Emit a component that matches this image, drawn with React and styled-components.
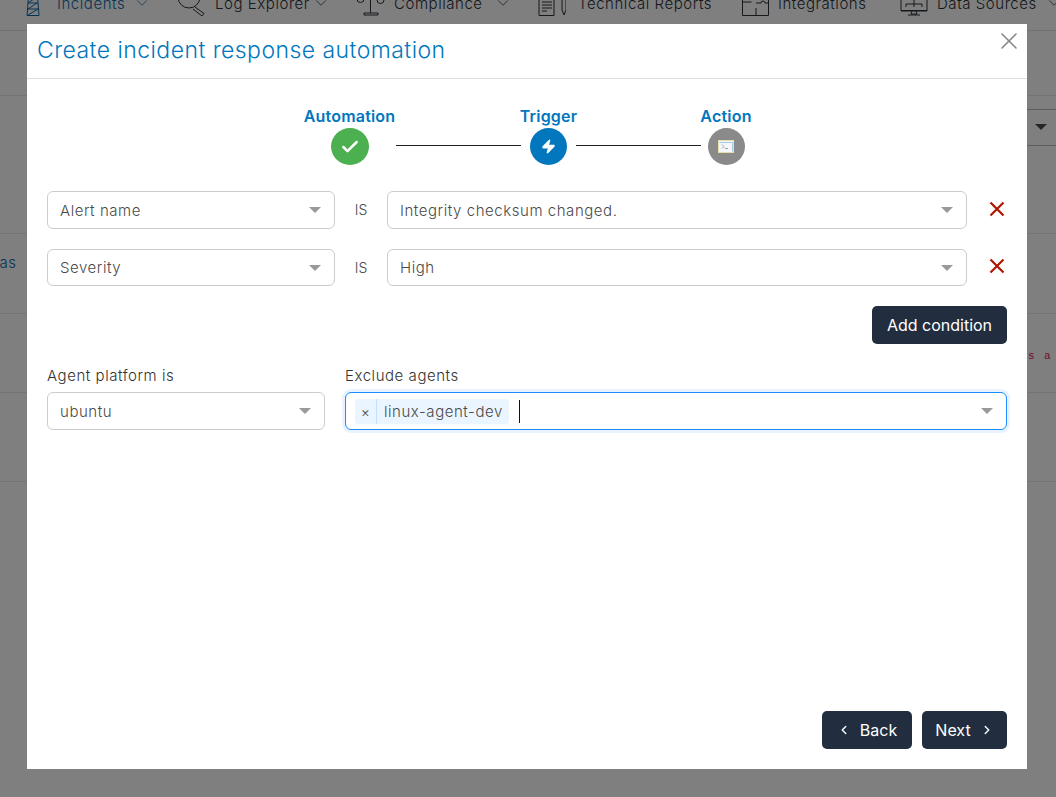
import React from "react";
import styled, { createGlobalStyle } from "styled-components";
import { Check, ChevronDown, ChevronLeft, ChevronRight, X, Zap } from "lucide-react";

const GlobalStyle = createGlobalStyle`
  html, body {
    margin: 0;
    height: 100%;
    overflow: hidden;
    background: #fff;
    font-family: "Inter", "Open Sans", sans-serif;
  }
  * { box-sizing: border-box; }
`;

const navItems = [
  { label: "Incidents", icon: "tower", slot: 35, textWidth: 69, chevron: true, blue: true },
  { label: "Log Explorer", icon: "search", slot: 37, textWidth: 90, chevron: true },
  { label: "Compliance", icon: "scale", slot: 37, textWidth: 93, chevron: true },
  { label: "Technical Reports", icon: "doc", slot: 40, textWidth: 134 },
  { label: "Integrations", icon: "puzzle", slot: 36, textWidth: 92 },
  { label: "Data Sources", icon: "monitor", slot: 37, textWidth: 101, chevron: true },
];

// y runs from -10 so the numbers read as page pixels, the nav is scrolled off the top
const navIconPaths = {
  tower: "M7 -10L5 15.500h12L15 -10M6.500 -3h9M6 3h10M5.500 9h11M6 9l9 -6M6 15l10 -6M6 3l9 -6",
  search: "M0 -3a11 11 0 1 0 22 0a11 11 0 1 0 -22 0M4 -3a7 7 0 0 1 7 -7M17 7l9 6.500l-2 2.500l-9 -7",
  scale: "M13.500 -8V13M7 13h14v2H7zM5 -6h17M0 -1a3.500 3.500 0 0 0 7 0M20 0a3.500 3.500 0 0 0 7 0",
  doc: "M1 -5h15v20.500H1zM4 2h10M4 5h10M4 8h10M4 11h5M24 -3h4v13l-2 5l-2 -5z",
  puzzle: "M0.500 -8h26v23.500H0.500zM0.500 2h9M14 15.500V8M14 -8v5M14 3h5a2 2 0 0 1 4 0h3.500",
  monitor: "M1 -6h26v17H1zM1 10.500h26M12 11l-1 3h6l-1 -3M8 15h12M14 -2v6M6 4h16M6 4v3M14 4v3M22 4v3",
};

const NavIcon = ({ name }) => (
  <svg width="28" height="26" viewBox="0 -10 28 26" fill="none" stroke="currentColor" strokeWidth="1">
    <path d={navIconPaths[name]} />
  </svg>
);

const CrossIcon = () => (
  <svg width="16" height="16" viewBox="0 0 16 16">
    <path d="M1.500 1.500L14.500 14.500M14.500 1.500L1.500 14.500" stroke="#b01500" strokeWidth="2.200" />
  </svg>
);

const App = () => {
  return (
    <>
      <GlobalStyle />
      <Page>
        <TopNav>
          {navItems.map((item) => (
            <NavItem key={item.label} $blue={item.blue}>
              <NavIconSlot $width={item.slot}>
                <NavIcon name={item.icon} />
              </NavIconSlot>
              <NavLabel $width={item.textWidth}>{item.label}</NavLabel>
              {item.chevron && <ChevronDown size={18} strokeWidth={1} />}
            </NavItem>
          ))}
        </TopNav>
        <PageRow $height={65} />
        <PageRow $height={138}>
          <PageSelect>
            <Caret $dark $right={38} $top={14} />
          </PageSelect>
        </PageRow>
        <PageRow $height={80}>
          <PageLink>
            <span>Alias</span>
            <PageLinkSub>s</PageLinkSub>
          </PageLink>
        </PageRow>
        <PageRow $height={79}>
          <PageCode>s a t</PageCode>
        </PageRow>
        <PageRow $height={89} />
      </Page>

      <Overlay>
        <Modal>
          <ModalHeader>
            <ModalTitle>Create incident response automation</ModalTitle>
            <CloseButton>
              <X size={28} strokeWidth={1.4} />
            </CloseButton>
          </ModalHeader>
          <ModalBody>
            <Stepper>
              <Step $width={93}>
                <StepLabel>Automation</StepLabel>
                <StepCircle $color="#4caf50" $size={38}>
                  <Check size={20} strokeWidth={3} color="#fff" />
                </StepCircle>
              </Step>
              <StepLine />
              <Step $width={55}>
                <StepLabel>Trigger</StepLabel>
                <StepCircle $color="#0277bd">
                  <Zap size={15} fill="#fff" color="#fff" />
                </StepCircle>
              </Step>
              <StepLine />
              <Step $width={50}>
                <StepLabel>Action</StepLabel>
                <StepCircle $color="#8a8a8a">
                  <svg width="16" height="13" viewBox="0 0 16 13">
                    <rect x="0.5" y="0.5" width="15" height="12" fill="#f4f6f7" stroke="#e8dfae" />
                    <path d="M1.500 2.500h13M14.500 2.500v9" fill="none" stroke="#8fc0e0" strokeWidth="0.8" />
                    <path d="M4 4.500l2 2l-2 2M7 8.500h3" fill="none" stroke="#8a8a8a" strokeWidth="0.8" />
                  </svg>
                </StepCircle>
              </Step>
            </Stepper>

            <ConditionRow>
              <Select $width="288px">
                Alert name
                <Caret />
              </Select>
              <IsLabel>IS</IsLabel>
              <Select $width="580px">
                Integrity checksum changed.
                <Caret />
              </Select>
              <RemoveButton>
                <CrossIcon />
              </RemoveButton>
            </ConditionRow>
            <ConditionRow>
              <Select $width="288px">
                Severity
                <Caret />
              </Select>
              <IsLabel>IS</IsLabel>
              <Select $width="580px">
                High
                <Caret />
              </Select>
              <RemoveButton>
                <CrossIcon />
              </RemoveButton>
            </ConditionRow>

            <AddRow>
              <DarkButton $width={135}>Add condition</DarkButton>
            </AddRow>

            <FilterRow>
              <Field $width="278px">
                <FieldLabel>Agent platform is</FieldLabel>
                <Select $width="100%">
                  ubuntu
                  <Caret />
                </Select>
              </Field>
              <Field $width="662px">
                <FieldLabel>Exclude agents</FieldLabel>
                <Select $width="100%" $focused>
                  <Chip>
                    <ChipRemove>×</ChipRemove>
                    <ChipText>linux-agent-dev</ChipText>
                  </Chip>
                  <TextCursor />
                  <Caret />
                </Select>
              </Field>
            </FilterRow>

            <Footer>
              <DarkButton $width={90}>
                <ChevronLeft size={14} strokeWidth={2.4} />
                <span>Back</span>
              </DarkButton>
              <DarkButton $width={85}>
                <span>Next</span>
                <ChevronRight size={14} strokeWidth={2.4} />
              </DarkButton>
            </Footer>
          </ModalBody>
        </Modal>
      </Overlay>
    </>
  );
};

export default App;

const Page = styled.div`
  width: 100%;
  height: 797px;
  overflow: hidden;
  color: #2b3038;
`;

const TopNav = styled.nav`
  display: grid;
  grid-template-columns: 156px 179px 181px 204px 158px 1fr;
  height: 31px;
  padding-left: 22px;
  overflow: hidden;
  border-bottom: 1px solid #e4e4e4;
  font-size: 15px;
  font-weight: 300;
  letter-spacing: 0.55px;
`;

const NavItem = styled.div`
  display: flex;
  align-items: center;
  height: 26px;
  margin-top: -10px;
  color: ${(p) => (p.$blue ? "#0d6aa8" : "#2b3038")};

  svg { flex-shrink: 0; }
`;

const NavIconSlot = styled.span`
  display: flex;
  flex-shrink: 0;
  width: ${(p) => p.$width}px;
`;

const NavLabel = styled.span`
  flex-shrink: 0;
  width: ${(p) => p.$width}px;
  margin-right: 7px;
  white-space: nowrap;
`;

const PageRow = styled.div`
  display: flex;
  height: ${(p) => p.$height}px;
  border-bottom: 1px solid #e8e8e8;
`;

const PageSelect = styled.div`
  position: relative;
  flex-shrink: 0;
  width: 120px;
  height: 37px;
  margin: 13px -30px 0 auto;
  border: 1px solid #bdbdbd;
`;

const PageLink = styled.div`
  display: flex;
  flex-direction: column;
  gap: 3px;
  margin: 19px 0 0 -19px;
  font-size: 15px;
  line-height: 20px;
  letter-spacing: 0.5px;
  color: #0d6aa8;
  font-weight: 300;
`;

const PageLinkSub = styled.span`
  margin-left: 13px;
  font-size: 12px;
  line-height: 14px;
`;

const PageCode = styled.span`
  flex-shrink: 0;
  width: 40px;
  margin: 35px -12px 0 auto;
  font-family: "Liberation Mono", monospace;
  font-size: 11px;
  line-height: 14px;
  letter-spacing: 1.4px;
  white-space: pre;
  color: #d81b60;
`;

const Overlay = styled.div`
  position: fixed;
  inset: 0;
  background: rgba(0, 0, 0, 0.5);
  padding: 24px 29px 28px 27px;
`;

const Modal = styled.div`
  display: flex;
  flex-direction: column;
  width: 1000px;
  height: 745px;
  background: #fff;
`;

const ModalHeader = styled.header`
  display: flex;
  justify-content: space-between;
  height: 55px;
  padding: 13px 4px 0 10px;
  border-bottom: 1px solid #e0e0e0;
`;

const ModalTitle = styled.h2`
  margin: 0;
  font-size: 23px;
  line-height: 27px;
  font-weight: 300;
  letter-spacing: 0.45px;
  color: #0277bd;
`;

const CloseButton = styled.button`
  display: flex;
  height: 28px;
  margin-top: -10px;
  padding: 0;
  border: none;
  background: none;
  color: #888;
`;

const ModalBody = styled.div`
  display: flex;
  flex: 1;
  flex-direction: column;
  padding: 27px 20px 20px;
`;

const Stepper = styled.div`
  display: flex;
  justify-content: center;
  margin-bottom: 26px;
`;

const Step = styled.div`
  display: flex;
  flex-direction: column;
  align-items: center;
  gap: 1px;
  width: ${(p) => p.$width}px;
  height: 59px;
`;

const StepLabel = styled.span`
  font-size: 16px;
  line-height: 21px;
  font-weight: 600;
  letter-spacing: 0.2px;
  color: #0277bd;
  white-space: nowrap;
`;

const StepCircle = styled.span`
  display: flex;
  align-items: center;
  justify-content: center;
  flex-shrink: 0;
  width: ${(p) => p.$size ?? 37}px;
  height: 37px;
  border-radius: 50%;
  background: ${(p) => p.$color};
`;

const StepLine = styled.span`
  width: 125px;
  height: 1px;
  margin-top: 39px;
  background: #222;
`;

const ConditionRow = styled.div`
  display: flex;
  align-items: center;
  margin-bottom: 20px;
`;

const Select = styled.div`
  position: relative;
  display: flex;
  align-items: center;
  flex-shrink: 0;
  width: ${(p) => p.$width};
  height: 37.5px;
  padding-left: ${(p) => (p.$focused ? "9px" : "12px")};
  padding-top: 0.5px;
  font-size: 15px;
  font-weight: 300;
  letter-spacing: 0.55px;
  color: #4a4a4a;
  border: 1px solid ${(p) => (p.$focused ? "#1a8cff" : "#cccccc")};
  border-radius: 6px;
  box-shadow: ${(p) => (p.$focused ? "0 0 0 3px #e8f3ff" : "none")};
`;

const Caret = styled.span`
  position: absolute;
  top: ${(p) => p.$top ?? 15}px;
  right: ${(p) => p.$right ?? 13}px;
  width: 0;
  height: 0;
  border-left: 6px solid transparent;
  border-right: 6px solid transparent;
  border-top: 6px solid ${(p) => (p.$dark ? "#4c4c4c" : "#999")};
`;

const IsLabel = styled.span`
  flex-shrink: 0;
  width: 52px;
  text-align: center;
  font-size: 14px;
  font-weight: 300;
  color: #4a4a4a;
`;

const RemoveButton = styled.button`
  display: flex;
  flex-shrink: 0;
  margin: -2px 0 0 22px;
  padding: 0;
  border: none;
  background: none;
`;

const AddRow = styled.div`
  display: flex;
  justify-content: flex-end;
  margin-bottom: 22px;
`;

const DarkButton = styled.button`
  display: flex;
  align-items: center;
  justify-content: center;
  gap: 9px;
  width: ${(p) => p.$width}px;
  height: 38px;
  padding: 0;
  border: none;
  border-radius: 5px;
  background: #222e3f;
  color: #fff;
  font-family: inherit;
  font-size: 16px;
  font-weight: 400;
`;

const FilterRow = styled.div`
  display: flex;
  gap: 20px;
`;

const Field = styled.div`
  display: flex;
  flex-direction: column;
  gap: 6px;
  width: ${(p) => p.$width};
`;

const FieldLabel = styled.label`
  font-size: 15px;
  line-height: 20px;
  font-weight: 300;
  letter-spacing: 0.55px;
  color: #333;
`;

const Chip = styled.span`
  display: flex;
  align-items: center;
  height: 25px;
  background: #ebf5ff;
  border-radius: 3px;
`;

const ChipRemove = styled.span`
  display: flex;
  align-items: center;
  justify-content: center;
  width: 22px;
  height: 100%;
  border-right: 1px solid #c2e0ff;
  font-size: 14px;
`;

const ChipText = styled.span`
  padding: 0 6px 0 7px;
`;

const TextCursor = styled.span`
  width: 1.5px;
  height: 23px;
  margin-left: 10px;
  background: #111;
`;

const Footer = styled.div`
  display: flex;
  justify-content: flex-end;
  gap: 10px;
  margin-top: auto;
`;
